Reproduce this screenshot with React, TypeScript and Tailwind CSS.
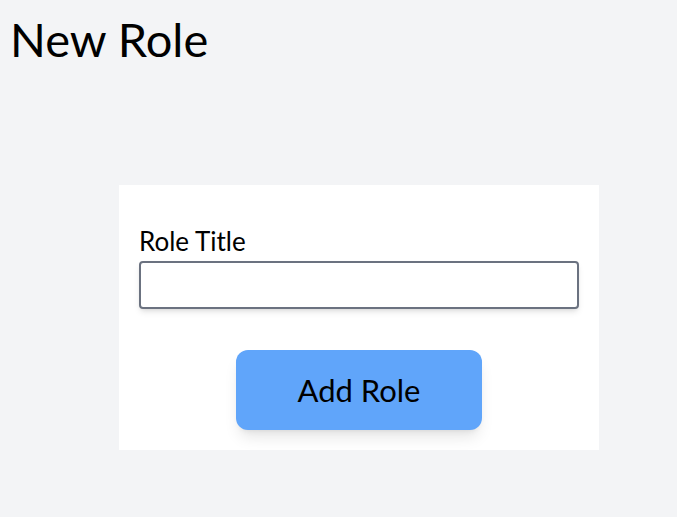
export default function App() {
  return (
    <div className="min-h-[517px] bg-gray-100 font-['Lato',sans-serif] text-black">
      <h1 className="pl-[10px] pt-[10px] text-[47px] leading-[58px]">New Role</h1>

      <div className="ml-[119px] mt-[117px] w-[480px] bg-white px-5 pt-10 pb-5">
        <label className="block text-[26px] leading-8">Role Title</label>
        <input
          type="text"
          className="mt-1 block h-12 w-full rounded border-2 border-[#6b7280] bg-white px-3 text-xl shadow-md outline-none"
        />
        <div className="mt-[41px] flex justify-center">
          <button className="h-20 w-[246px] rounded-xl bg-[#60a5fa] text-[31px] shadow-lg">
            Add Role
          </button>
        </div>
      </div>
    </div>
  )
}
